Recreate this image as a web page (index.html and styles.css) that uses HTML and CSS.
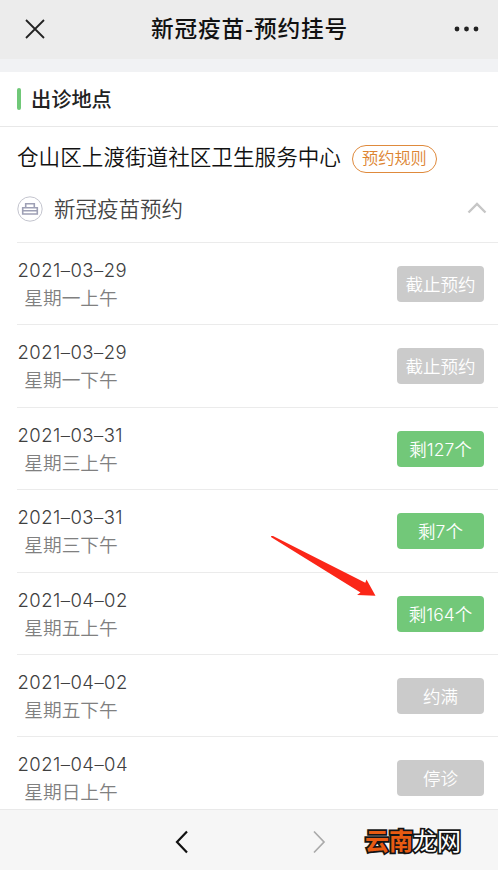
FILE: index.html
```html
<!DOCTYPE html>
<html lang="zh-CN">
<head>
<meta charset="UTF-8">
<title>新冠疫苗-预约挂号</title>
<link rel="stylesheet" href="styles.css">
</head>
<body>
<div class="app">
  <header class="topbar">
    <svg class="close" viewBox="0 0 20 20"><path d="M1 1L19 19M19 1L1 19"/></svg>
    <h1>新冠疫苗-预约挂号</h1>
    <svg class="more" viewBox="0 0 26 6"><circle cx="3" cy="3" r="2.4"/><circle cx="12.5" cy="3" r="2.4"/><circle cx="22" cy="3" r="2.4"/></svg>
  </header>
  <main>
    <div class="section"><i class="mark"></i><h2>出诊地点</h2></div>
    <div class="place"><span class="name">仓山区上渡街道社区卫生服务中心</span><span class="rule">预约规则</span></div>
    <div class="dept">
      <svg class="dept-icon" viewBox="0 0 26 26"><circle cx="13" cy="13" r="12.2"/><path d="M8.7 11.5V7.8H17.3V11.5M5.7 11.7H20.3V18H5.7ZM5.7 14.8H20.3"/></svg>
      <span>新冠疫苗预约</span>
      <svg class="up" viewBox="0 0 20 12"><path d="M1.5 10.5L10 2L18.5 10.5"/></svg>
    </div>
    <ul class="slots">
      <li><div><p class="date">2021–03–29</p><p class="day">星期一上午</p></div><span class="btn">截止预约</span></li>
      <li><div><p class="date">2021–03–29</p><p class="day">星期一下午</p></div><span class="btn">截止预约</span></li>
      <li><div><p class="date">2021–03–31</p><p class="day">星期三上午</p></div><span class="btn open">剩127个</span></li>
      <li><div><p class="date">2021–03–31</p><p class="day">星期三下午</p></div><span class="btn open">剩7个</span></li>
      <li><div><p class="date">2021–04–02</p><p class="day">星期五上午</p></div><span class="btn open">剩164个</span></li>
      <li><div><p class="date">2021–04–02</p><p class="day">星期五下午</p></div><span class="btn">约满</span></li>
      <li><div><p class="date">2021–04–04</p><p class="day">星期日上午</p></div><span class="btn">停诊</span></li>
    </ul>
  </main>
  <footer class="navbar">
    <svg class="back" viewBox="0 0 14 24"><path d="M12 1.5L2 12L12 22.5"/></svg>
    <svg class="forward" viewBox="0 0 14 24"><path d="M2 1.5L12 12L2 22.5"/></svg>
    <div class="brand"><b>云南</b><span>龙网</span></div>
  </footer>
  <svg class="arrow" viewBox="0 0 106 62"><path d="M0 0L2 0L94.300 46.800L95.500 43.500L104.500 59.800L86 59L89.500 56.500L.3 1.200Z"/></svg>
</div>
</body>
</html>
```
FILE: styles.css
```css
* { box-sizing: border-box; margin: 0; padding: 0; }
body { font-family: "Noto Sans CJK SC", sans-serif; font-weight: 350; background: #fff; }
svg { fill: none; flex: none; display: block; }
.app { position: relative; width: 498px; height: 870px; overflow: hidden; display: flex; flex-direction: column; }
.topbar { height: 59px; flex: none; background: #ececec; display: grid; grid-template-columns: 60px 1fr 60px; align-items: center; padding: 0 15px 1px 25px; }
.close { width: 20px; height: 20px; stroke: #222; stroke-width: 1.8; }
h1 { font-size: 22.7px; line-height: 32px; font-weight: 500; color: #111; text-align: center; letter-spacing: .8px; padding: 0 9px 3px 0; white-space: nowrap; }
.more { width: 26px; height: 6px; fill: #222; justify-self: end; margin-right: 3px; }
main { flex: 1; min-height: 0; overflow: hidden; border-top: 13px solid #f1f2f4; }
.section { height: 55px; display: flex; align-items: center; padding-left: 17px; border-bottom: 1px solid #e8e8e8; }
.mark { width: 4px; height: 22px; border-radius: 2px; background: #70c878; margin-right: 10px; }
h2 { font-size: 20.2px; line-height: 28px; font-weight: 500; color: #222; padding-bottom: 1px; }
.place { height: 61px; display: flex; align-items: center; padding-left: 17px; }
.name { font-size: 21.6px; line-height: 32px; color: #111; margin-right: 11px; padding-bottom: 4px; white-space: nowrap; }
.rule { width: 85px; height: 28px; margin-top: 3px; border: 1.5px solid #df8a3c; border-radius: 14px; text-align: center; font-size: 16.2px; line-height: 22px; color: #dd8430; }
.dept { height: 54px; margin-left: 17px; display: flex; align-items: center; padding: 0 11px 12px 0; color: #444; font-size: 21.5px; line-height: 32px; }
.dept span { padding-bottom: 2px; }
.dept-icon { width: 26px; height: 26px; margin-right: 11px; stroke: #9ea0b5; stroke-width: 1.6; }
.dept-icon circle { stroke: #c3c4ce; stroke-width: 1; }
.up { width: 20px; height: 12px; margin: 0 0 2px auto; stroke: #c6c6c6; stroke-width: 2.4; }
.slots { list-style: none; margin-left: 17px; }
.slots li { height: 82.4px; border-top: 1px solid #ebebeb; display: flex; justify-content: space-between; align-items: flex-start; padding: 14px 14px 0 0; }
.date { font-family: Inter, sans-serif; font-weight: 300; font-size: 18.5px; line-height: 27px; letter-spacing: .45px; color: #404040; padding-left: .5px; }
.day { font-size: 18.7px; line-height: 26px; color: #808080; width: 108px; text-align: center; }
.btn { width: 87px; height: 36px; margin-top: 9px; border-radius: 4px; background: #cbcbcb; color: #fff; font-family: Inter, "Noto Sans CJK SC", sans-serif; font-size: 17.5px; line-height: 37px; text-align: center; }
.open { background: #72c879; }
.navbar { height: 61px; flex: none; border-top: 1px solid #e9e9e9; background: #f6f6f6; display: flex; align-items: center; padding: 4px 0 0 175px; }
.back, .forward { width: 14px; height: 24px; stroke-width: 2.2; stroke: #111; }
.forward { margin-left: 123px; stroke: #aaa; stroke-width: 1.7; }
.brand { margin: 0 0 4px 39px; display: flex; font-size: 24px; line-height: 32px; -webkit-text-stroke: 3.5px #151515; paint-order: stroke fill; white-space: nowrap; }
.brand b { font-weight: 700; color: #e95b12; }
.brand span { color: #fff; font-weight: 400; }
.arrow { position: absolute; left: 271px; top: 536px; width: 106px; height: 62px; fill: #fb2618; }
```
